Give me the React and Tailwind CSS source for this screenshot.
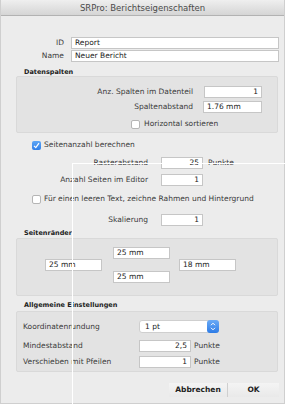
import React from "react";

function Field({ value, align = "left", className = "" }) {
  return (
    <div
      className={`h-[12px] bg-white border border-[#c6c6c6] px-[3px] flex items-center text-[7.5px] text-[#1a1a1a] leading-none ${
        align === "right" ? "justify-end" : ""
      } ${className}`}
    >
      {value}
    </div>
  );
}

function Check({ checked }) {
  if (checked) {
    return (
      <div className="w-[9px] h-[9px] rounded-[2px] bg-gradient-to-b from-[#5ea6f5] to-[#2f7fe8] flex items-center justify-center">
        <svg width="7" height="7" viewBox="0 0 7 7">
          <path d="M1 3.8 L2.8 5.6 L6 1.2" stroke="white" strokeWidth="1.2" fill="none" />
        </svg>
      </div>
    );
  }
  return <div className="w-[9px] h-[9px] rounded-[2px] bg-white border border-[#b5b5b5]" />;
}

function Heading({ children, className = "" }) {
  return (
    <div className={`ml-[23px] h-[8px] leading-[8px] text-[6.5px] font-bold text-[#222] ${className}`}>
      {children}
    </div>
  );
}

export default function App() {
  return (
    <div className="relative w-[291px] h-[411px] bg-white font-['DejaVu_Sans',sans-serif] text-[7.5px] leading-[12px] text-[#3a3a3a]">
      <div className="w-[285px] h-[404px] bg-[#ececec] border-r border-b border-l border-[#cfcfcf] flex flex-col">
        <div className="h-[16px] shrink-0 bg-gradient-to-b from-[#efefef] to-[#d5d5d5] border-b border-[#b2b2b2] flex items-center justify-center text-[8.5px] text-[#4a4a4a]">
          SRPro: Berichtseigenschaften
        </div>

        <div className="mt-[21px] flex flex-col gap-[1px]">
          <div className="flex items-center">
            <span className="w-[63px] text-right">ID</span>
            <Field value="Report" className="ml-[7px] w-[208px]" />
          </div>
          <div className="flex items-center">
            <span className="w-[63px] text-right">Name</span>
            <Field value="Neuer Bericht" className="ml-[7px] w-[208px]" />
          </div>
        </div>

        <Heading className="mt-[6px]">Datenspalten</Heading>
        <div className="ml-[15px] w-[262px] h-[57px] bg-[#e3e3e3] border border-[#d9d9d9] rounded-[2px] pt-[9px] flex flex-col">
          <div className="flex items-center">
            <span className="w-[176px] text-right">Anz. Spalten im Datenteil</span>
            <Field value="1" align="right" className="ml-[11px] w-[58px]" />
          </div>
          <div className="flex items-center mt-[3px]">
            <span className="w-[176px] text-right">Spaltenabstand</span>
            <Field value="1.76 mm" className="ml-[10px] w-[59px]" />
          </div>
          <div className="flex items-center mt-[5px] pl-[114px] gap-[4px]">
            <Check />
            <span>Horizontal sortieren</span>
          </div>
        </div>

        <div className="flex items-center mt-[6px] ml-[31px] gap-[3px]">
          <Check checked />
          <span>Seitenanzahl berechnen</span>
        </div>
        <div className="flex items-center mt-[6px]">
          <span className="w-[147px] text-right">Rasterabstand</span>
          <Field value="25" align="right" className="ml-[13px] w-[42px]" />
          <span className="ml-[5px]">Punkte</span>
        </div>
        <div className="flex items-center mt-[5px]">
          <span className="w-[147px] text-right">Anzahl Seiten im Editor</span>
          <Field value="1" align="right" className="ml-[13px] w-[42px]" />
        </div>
        <div className="flex items-center mt-[7px] ml-[31px] gap-[3px]">
          <Check />
          <span>Für einen leeren Text, zeichne Rahmen und Hintergrund</span>
        </div>
        <div className="flex items-center mt-[9px]">
          <span className="w-[147px] text-right">Skalierung</span>
          <Field value="1" align="right" className="ml-[13px] w-[42px]" />
        </div>

        <Heading className="mt-[3px]">Seitenränder</Heading>
        <div className="mt-[1px] ml-[15px] w-[262px] h-[58px] bg-[#e3e3e3] border border-[#d9d9d9] rounded-[2px] pt-[8px] flex flex-col">
          <Field value="25 mm" className="ml-[96px] w-[57px]" />
          <div className="flex">
            <Field value="25 mm" className="ml-[28px] w-[57px]" />
            <Field value="18 mm" className="ml-[77px] w-[57px]" />
          </div>
          <Field value="25 mm" className="ml-[96px] w-[57px]" />
        </div>

        <Heading className="mt-[5px]">Allgemeine Einstellungen</Heading>
        <div className="mt-[2px] ml-[15px] w-[262px] h-[61px] bg-[#e3e3e3] border border-[#d9d9d9] rounded-[2px] pt-[8px] flex flex-col">
          <div className="flex items-center">
            <span className="w-[122px] pl-[6px]">Koordinatenrundung</span>
            <div className="w-[80px] h-[13px] bg-white rounded-[3px] border border-[#cfcfcf] flex items-center justify-between pl-[5px] text-[#1a1a1a]">
              <span>1 pt</span>
              <div className="w-[12px] h-[13px] -mr-px rounded-[3px] bg-gradient-to-b from-[#6aaaf6] to-[#2d7ce6] flex items-center justify-center">
                <svg width="6" height="9" viewBox="0 0 6 9">
                  <path d="M1 3.2 L3 1.2 L5 3.2 M1 5.8 L3 7.8 L5 5.8" stroke="white" strokeWidth="1" fill="none" />
                </svg>
              </div>
            </div>
          </div>
          <div className="flex items-center mt-[7px]">
            <span className="w-[122px] pl-[6px]">Mindestabstand</span>
            <Field value="2,5" align="right" className="w-[52px]" />
            <span className="ml-[3px]">Punkte</span>
          </div>
          <div className="flex items-center mt-[4px]">
            <span className="w-[122px] pl-[6px]">Verschieben mit Pfeilen</span>
            <Field value="1" align="right" className="w-[52px]" />
            <span className="ml-[3px]">Punkte</span>
          </div>
        </div>

        <div className="mt-[11px] flex justify-end pr-[5px]">
          <div className="w-[58px] h-[14px] bg-gradient-to-b from-[#f4f4f4] to-[#e9e9e9] flex items-center justify-center font-bold text-[#222]">
            Abbrechen
          </div>
          <div className="w-px h-[14px] bg-[#cfcfcf]" />
          <div className="w-[51px] h-[14px] bg-gradient-to-b from-[#f4f4f4] to-[#e9e9e9] flex items-center justify-center font-bold text-[#222]">
            OK
          </div>
        </div>
      </div>

      <div className="absolute left-[72px] top-[163px] w-px bottom-0 bg-white" />
      <div className="absolute left-[72px] top-[163px] right-[6px] h-px bg-white" />
    </div>
  );
}
